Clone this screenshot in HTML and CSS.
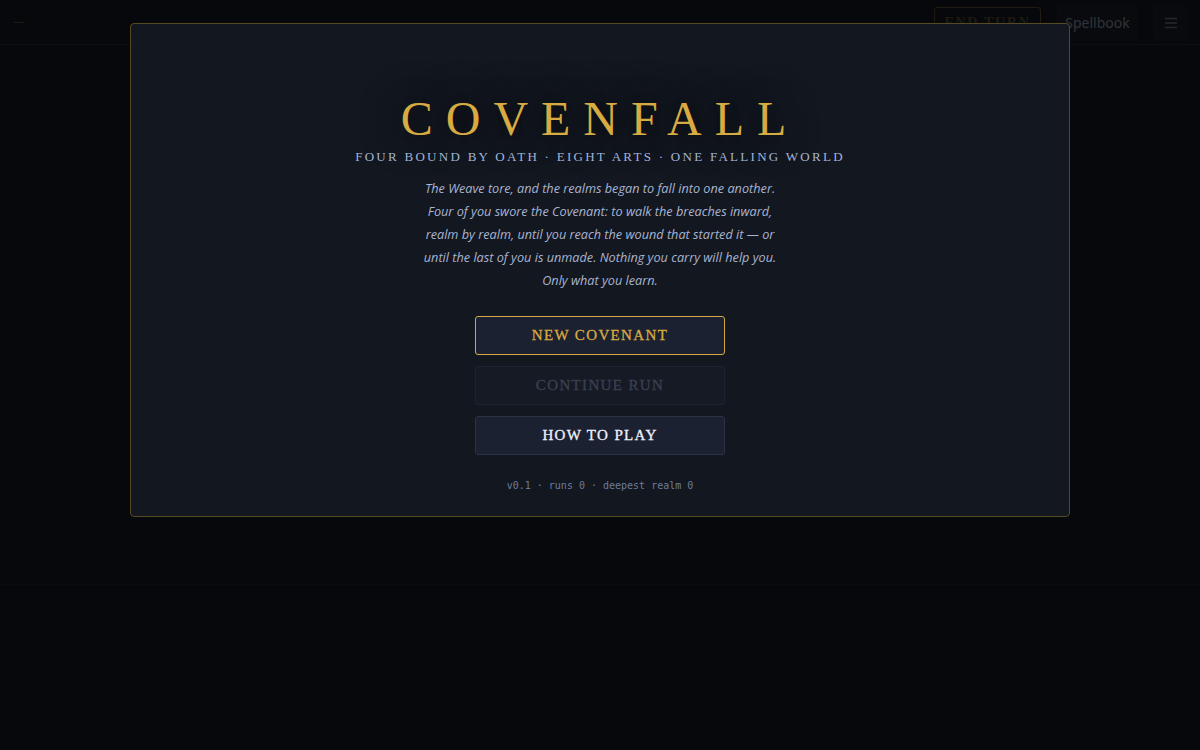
FILE: index.html
```html
<!DOCTYPE html>
<html lang="en">
<head>
<meta charset="utf-8">
<title>Covenfall</title>
<link rel="stylesheet" href="styles.css">
</head>
<body>
<div class="app">
  <header class="topbar">
    <div class="topbar-left"><span class="dash"></span></div>
    <div class="topbar-right">
      <button class="btn-end">END TURN</button>
      <button class="btn-spell">Spellbook</button>
      <button class="btn-menu" aria-label="Menu">
        <svg width="14" height="12" viewBox="0 0 14 12"><path d="M1 1.5h12M1 6h12M1 10.5h12" stroke="currentColor" stroke-width="1.3" fill="none"/></svg>
      </button>
    </div>
  </header>
  <main class="board"></main>
  <footer class="tray"></footer>
</div>

<div class="overlay">
  <section class="modal">
    <h1 class="title">COVENFALL</h1>
    <p class="subtitle">FOUR BOUND BY OATH · EIGHT ARTS · ONE FALLING WORLD</p>
    <p class="lore">The Weave tore, and the realms began to fall into one another.<br>Four of you swore the Covenant: to walk the breaches inward,<br>realm by realm, until you reach the wound that started it — or<br>until the last of you is unmade. Nothing you carry will help you.<br>Only what you learn.</p>
    <div class="menu">
      <button class="mbtn mbtn-primary">NEW COVENANT</button>
      <button class="mbtn mbtn-disabled" disabled>CONTINUE RUN</button>
      <button class="mbtn">HOW TO PLAY</button>
    </div>
    <p class="meta">v0.1 · runs 0 · deepest realm 0</p>
  </section>
</div>
</body>
</html>
```

FILE: styles.css
```css
* { box-sizing: border-box; }
html, body { margin: 0; height: 100%; }
body {
  background: #141823;
  font-family: "Noto Sans", "DejaVu Sans", sans-serif;
  color: #c8d0e0;
  overflow: hidden;
}
.app {
  height: 750px;
  display: flex;
  flex-direction: column;
}
.topbar {
  height: 45px;
  flex: none;
  display: flex;
  align-items: center;
  justify-content: space-between;
  padding: 1px 12px 0 14px;
  border-bottom: 1px solid #242a38;
}
.dash {
  display: block;
  width: 10px;
  height: 1px;
  background: #3d5a3a;
}
.topbar-right {
  display: flex;
  align-items: center;
}
.btn-end {
  width: 107px;
  height: 31px;
  background: transparent;
  border: 1px solid #5e5330;
  border-radius: 3px;
  color: #564c2e;
  font-family: "Liberation Serif", serif;
  font-size: 14px;
  font-weight: 700;
  letter-spacing: 0.12em;
  padding: 0;
  margin-right: 16px;
}
.btn-spell {
  height: 36px;
  width: 81px;
  background: #1a1e29;
  border: none;
  border-radius: 3px;
  color: #8a94a8;
  font-family: "Noto Sans", sans-serif;
  font-size: 14px;
  padding: 0;
  margin-right: 15px;
}
.btn-menu {
  width: 35px;
  height: 36px;
  background: #1a1e29;
  border: none;
  border-radius: 3px;
  color: #6c768a;
  display: flex;
  align-items: center;
  justify-content: center;
  padding: 0;
}
.board { flex: 1; }
.tray {
  height: 166px;
  flex: none;
  border-top: 1px solid #1f2430;
}

.overlay {
  position: fixed;
  inset: 0;
  background: rgba(0, 0, 0, 0.66);
  display: flex;
  justify-content: center;
  align-items: flex-start;
  padding-top: 23px;
}
.modal {
  width: 940px;
  background: #131720;
  border: 1px solid #564a22;
  border-radius: 4px;
  padding: 68px 40px 23px;
  display: flex;
  flex-direction: column;
  align-items: center;
  text-align: center;
}
.title {
  margin: 0;
  font-family: "Liberation Serif", serif;
  font-weight: 400;
  font-size: 48px;
  line-height: 54px;
  letter-spacing: 0.27em;
  color: #d8ab42;
  text-shadow: 0 0 24px rgba(0, 0, 0, 0.8), 0 0 40px rgba(0, 0, 0, 0.5);
}
.subtitle {
  margin: 2px 0 0;
  font-family: "Liberation Serif", serif;
  font-size: 13px;
  line-height: 18px;
  letter-spacing: 0.175em;
  color: #a3b4d6;
}
.lore {
  margin: 11px 0 0;
  font-family: "Open Sans", sans-serif;
  font-style: italic;
  font-size: 12.7px;
  line-height: 23px;
  color: #a9b4d0;
}
.menu {
  margin-top: 24px;
  display: flex;
  flex-direction: column;
  gap: 11px;
  width: 250px;
}
.mbtn {
  height: 39px;
  background: #1c2131;
  border: 1px solid #2b3245;
  border-radius: 3px;
  font-family: "Liberation Serif", serif;
  font-size: 15px;
  font-weight: 400;
  letter-spacing: 0.09em;
  color: #eef2fb;
  padding: 0;
  -webkit-text-stroke: 0.3px currentColor;
}
.mbtn-primary {
  border-color: #d4a944;
  color: #d8ab42;
}
.mbtn-disabled {
  background: #161a25;
  border-color: #1e2331;
  color: #3a4150;
}
.meta {
  margin: 24px 0 0;
  font-family: "DejaVu Sans Mono", monospace;
  font-size: 10px;
  line-height: 14px;
  color: #6b7c9b;
}
```
